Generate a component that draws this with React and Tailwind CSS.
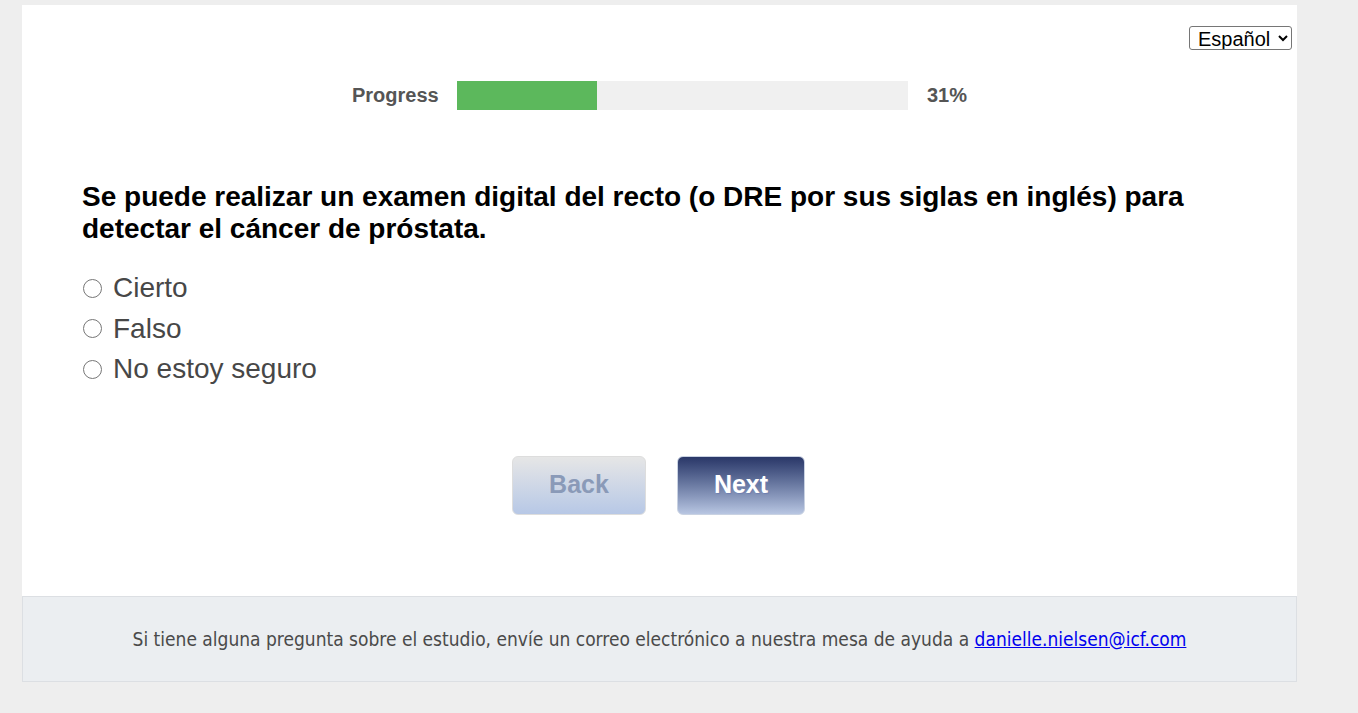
import React, { useState } from 'react'

const OPTIONS = ['Cierto', 'Falso', 'No estoy seguro']

export default function App() {
  const [answer, setAnswer] = useState(null)
  const [lang, setLang] = useState('es')
  const progress = 31

  return (
    <div className="min-h-[713px] bg-[#eeeeee] pt-[5px] pl-[22px] pr-[61px] font-['Liberation_Sans',Arial,sans-serif]">
      <div className="bg-white h-[591px]">
        <div className="flex justify-end pt-[21px] pr-[5px]">
          <select
            value={lang}
            onChange={(e) => setLang(e.target.value)}
            className="h-[24px] border border-[#767676] rounded-[3px] text-[20px] leading-none px-[4px] text-black bg-white"
          >
            <option value="es">Español</option>
            <option value="en">English</option>
          </select>
        </div>

        <div className="flex items-center mt-[30px] ml-[330px]">
          <span className="text-[20px] font-bold text-[#555555] w-[105px]">Progress</span>
          <div className="w-[451px] h-[29px] bg-[#f0f0f0]">
            <div className="h-full bg-[#5cb85c]" style={{ width: `${progress}%` }} />
          </div>
          <span className="ml-[19px] text-[20px] font-bold text-[#555555]">{progress}%</span>
        </div>

        <div className="px-[60px] mt-[71px]">
          <h2 className="text-[28px] leading-[32px] font-bold text-black">
            Se puede realizar un examen digital del recto (o DRE por sus siglas en inglés) para detectar el cáncer de próstata.
          </h2>
          <div className="mt-[23px] flex flex-col">
            {OPTIONS.map((o) => (
              <label key={o} className="flex items-center gap-[11px] text-[28px] leading-[40.5px] text-[#474747] cursor-pointer">
                <input
                  type="radio"
                  name="q"
                  checked={answer === o}
                  onChange={() => setAnswer(o)}
                  className="w-[19px] h-[19px] ml-[1px] accent-[#555]"
                />
                {o}
              </label>
            ))}
          </div>
        </div>

        <div className="flex justify-center gap-[31px] mt-[66px] pr-[2px]">
          <button className="w-[134px] h-[59px] rounded-[6px] border border-[#dddddd] bg-linear-to-b from-[#e6e6e6] to-[#b7c8e6] text-[25px] font-bold text-[#8a9ab8]">
            Back
          </button>
          <button className="w-[128px] h-[59px] rounded-[6px] border border-[#c9d2e2] bg-linear-to-b from-[#2a3768] to-[#b8c6e2] text-[25px] font-bold text-white [text-shadow:1px_1px_1px_#6f7fb0]">
            Next
          </button>
        </div>
      </div>

      <div className="h-[86px] bg-[#ebeef1] border border-[#dcdfe3] flex items-center justify-center text-[19px] text-[#4a4a4a] font-['DejaVu_Sans_Condensed','Open_Sans',sans-serif]">
        <span>
          Si tiene alguna pregunta sobre el estudio, envíe un correo electrónico a nuestra mesa de ayuda a{' '}
          <a href="#" className="text-[#0000ee] underline">danielle.nielsen@icf.com</a>
        </span>
      </div>
    </div>
  )
}
